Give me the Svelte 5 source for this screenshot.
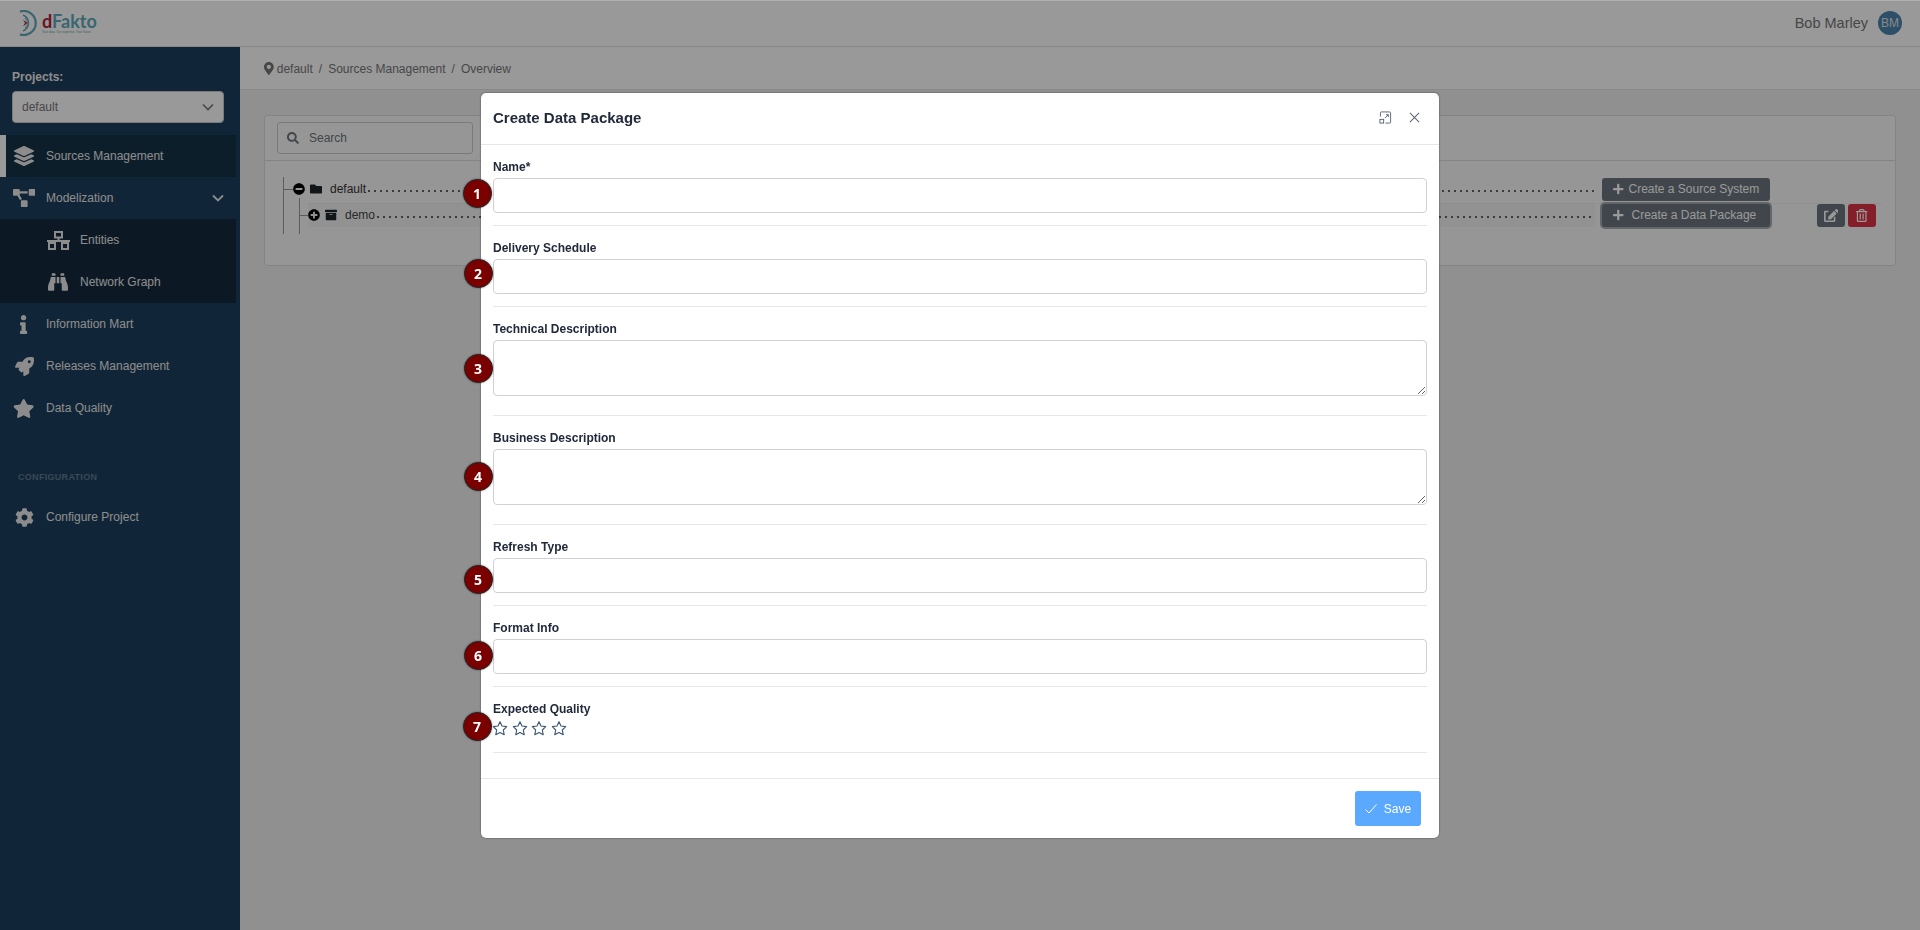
<script>
  const icons = {
    layers: [512, 512, 'M12.41 148.02l232.94 105.67c6.8 3.09 14.49 3.09 21.29 0l232.94-105.67c16.55-7.51 16.55-32.52 0-40.03L266.65 2.31a25.607 25.607 0 0 0-21.29 0L12.41 107.98c-16.55 7.51-16.55 32.53 0 40.04zm487.18 88.28l-58.09-26.33-161.64 73.27c-7.56 3.43-15.59 5.17-23.86 5.17s-16.29-1.74-23.86-5.17L70.51 209.97l-58.1 26.33c-16.55 7.5-16.55 32.5 0 40l232.94 105.59c6.8 3.08 14.49 3.08 21.29 0L499.59 276.3c16.55-7.5 16.55-32.5 0-40zm0 127.8l-57.87-26.23-161.86 73.37c-7.56 3.43-15.59 5.17-23.86 5.17s-16.29-1.74-23.86-5.17L70.29 337.87 12.41 364.1c-16.55 7.5-16.55 32.5 0 40l232.94 105.59c6.8 3.08 14.49 3.08 21.29 0L499.59 404.1c16.55-7.5 16.55-32.5 0-40z'],
    diagram: [640, 512, 'M384 320H256c-17.67 0-32 14.33-32 32v128c0 17.67 14.33 32 32 32h128c17.67 0 32-14.33 32-32V352c0-17.67-14.33-32-32-32zM192 32c0-17.67-14.33-32-32-32H32C14.33 0 0 14.33 0 32v128c0 17.67 14.33 32 32 32h95.72l73.16 128.04C211.98 300.98 232.4 288 256 288h.28L192 175.51V128h224V64H192V32zM608 0H480c-17.67 0-32 14.33-32 32v128c0 17.67 14.33 32 32 32h128c17.67 0 32-14.33 32-32V32c0-17.67-14.33-32-32-32z'],
    binoculars: [512, 512, 'M416 48c0-8.84-7.16-16-16-16h-64c-8.84 0-16 7.16-16 16v48h96V48zM63.91 159.99C61.4 253.84 3.46 274.22 0 404v44c0 17.67 14.33 32 32 32h96c17.67 0 32-14.33 32-32V288h32V128H95.84c-17.63 0-31.45 14.37-31.93 31.99zm384.18 0c-.48-17.62-14.3-31.99-31.93-31.99H320v160h32v160c0 17.67 14.33 32 32 32h96c17.67 0 32-14.33 32-32v-44c-3.46-129.78-61.4-150.16-63.91-244.01zM176 32h-64c-8.84 0-16 7.16-16 16v48h96V48c0-8.84-7.16-16-16-16zm48 256h64V128h-64v160z'],
    info: [192, 512, 'M20 424.229h20V279.771H20c-11.046 0-20-8.954-20-20V212c0-11.046 8.954-20 20-20h112c11.046 0 20 8.954 20 20v212.229h20c11.046 0 20 8.954 20 20V492c0 11.046-8.954 20-20 20H20c-11.046 0-20-8.954-20-20v-47.771c0-11.046 8.954-20 20-20zM96 0C56.235 0 24 32.235 24 72s32.235 72 72 72 72-32.235 72-72S135.764 0 96 0z'],
    rocket: [512, 512, 'M505.12019,19.09375c-1.18945-5.53125-6.65819-11-12.207-12.1875C460.716,0,435.507,0,410.40747,0,307.17523,0,245.26909,55.20312,199.05238,128H94.83772c-16.34763.01562-35.55658,11.875-42.88664,26.48438L2.51562,253.29688A28.4,28.4,0,0,0,0,264a24.00867,24.00867,0,0,0,24.00582,24H127.81618l-22.47457,22.46875c-11.36521,11.36133-12.99607,32.25781,0,45.25L156.24582,406.625c11.15623,11.1875,32.15619,13.15625,45.27726,0l22.47457-22.46875V488a24.00867,24.00867,0,0,0,24.00581,24,28.55934,28.55934,0,0,0,10.707-2.51562l98.72834-49.39063c14.62888-7.29687,26.50776-26.5,26.50776-42.85937V312.79688c72.59753-46.3125,128.03493-108.40626,128.03493-211.09376C512.07526,76.5,512.07526,51.29688,505.12019,19.09375ZM384.04033,168A40,40,0,1,1,424.05,128,40.02322,40.02322,0,0,1,384.04033,168Z'],
    star: [576, 512, 'M259.3 17.8L194 150.2 47.9 171.5c-26.2 3.8-36.7 36.1-17.7 54.6l105.7 103-25 145.5c-4.5 26.3 23.2 46 46.4 33.7L288 439.6l130.7 68.7c23.2 12.2 50.9-7.4 46.4-33.7l-25-145.5 105.7-103c19-18.5 8.5-50.8-17.7-54.6L382 150.2 316.7 17.8c-11.7-23.6-45.6-23.9-57.4 0z'],
    cog: [512, 512, 'M487.4 315.7l-42.6-24.6c4.3-23.2 4.3-47 0-70.2l42.6-24.6c4.9-2.8 7.1-8.6 5.5-14-11.1-35.6-30-67.8-54.7-94.6-3.8-4.1-10-5.1-14.8-2.3L380.8 110c-17.9-15.4-38.5-27.3-60.8-35.1V25.8c0-5.6-3.9-10.5-9.4-11.7-36.7-8.2-74.3-7.8-109.2 0-5.5 1.2-9.4 6.1-9.4 11.7V75c-22.2 7.9-42.8 19.8-60.8 35.1L88.7 85.5c-4.9-2.8-11-1.9-14.8 2.3-24.7 26.7-43.6 58.9-54.7 94.6-1.7 5.4.6 11.2 5.5 14L67.3 221c-4.3 23.2-4.3 47 0 70.2l-42.6 24.6c-4.9 2.8-7.1 8.6-5.5 14 11.1 35.6 30 67.8 54.7 94.6 3.8 4.1 10 5.1 14.8 2.3l42.6-24.6c17.9 15.4 38.5 27.3 60.8 35.1v49.2c0 5.6 3.9 10.5 9.4 11.7 36.7 8.2 74.3 7.8 109.2 0 5.5-1.2 9.4-6.1 9.4-11.7v-49.2c22.2-7.9 42.8-19.8 60.8-35.1l42.6 24.6c4.9 2.8 11 1.9 14.8-2.3 24.7-26.7 43.6-58.9 54.7-94.6 1.5-5.5-.7-11.3-5.6-14.1zM256 336c-44.1 0-80-35.9-80-80s35.9-80 80-80 80 35.9 80 80-35.9 80-80 80z'],
    marker: [384, 512, 'M172.268 501.67C26.97 291.031 0 268.413 0 192 0 85.961 85.961 0 192 0s192 85.961 192 192c0 76.413-26.97 99.031-172.268 309.67-9.535 13.774-29.93 13.773-39.464 0zM192 272c44.183 0 80-35.817 80-80s-35.817-80-80-80-80 35.817-80 80 35.817 80 80 80z'],
    search: [512, 512, 'M505 442.7L405.3 343c-4.5-4.5-10.6-7-17-7H372c27.6-35.3 44-79.7 44-128C416 93.1 322.9 0 208 0S0 93.1 0 208s93.1 208 208 208c48.3 0 92.7-16.4 128-44v16.3c0 6.4 2.5 12.5 7 17l99.7 99.7c9.4 9.4 24.6 9.4 33.9 0l28.3-28.3c9.4-9.4 9.4-24.6.1-34zM208 336c-70.7 0-128-57.2-128-128 0-70.7 57.2-128 128-128 70.7 0 128 57.2 128 128 0 70.7-57.2 128-128 128z'],
    folder: [512, 512, 'M464 128H272l-64-64H48C21.49 64 0 85.49 0 112v288c0 26.51 21.49 48 48 48h416c26.51 0 48-21.49 48-48V176c0-26.51-21.49-48-48-48z'],
    archive: [512, 512, 'M32 448c0 17.7 14.3 32 32 32h384c17.7 0 32-14.3 32-32V160H32v288zm160-212c0-6.6 5.4-12 12-12h104c6.6 0 12 5.4 12 12v8c0 6.6-5.4 12-12 12H204c-6.6 0-12-5.4-12-12v-8zM480 32H32C14.3 32 0 46.3 0 64v48c0 8.8 7.2 16 16 16h480c8.8 0 16-7.2 16-16V64c0-17.7-14.3-32-32-32z'],
    plusCircle: [512, 512, 'M256 8C119 8 8 119 8 256s111 248 248 248 248-111 248-248S393 8 256 8zm144 276c0 6.6-5.4 12-12 12h-92v92c0 6.6-5.4 12-12 12h-56c-6.6 0-12-5.4-12-12v-92h-92c-6.6 0-12-5.4-12-12v-56c0-6.6 5.4-12 12-12h92v-92c0-6.6 5.4-12 12-12h56c6.6 0 12 5.4 12 12v92h92c6.6 0 12 5.4 12 12v56z'],
    minusCircle: [512, 512, 'M256 8C119 8 8 119 8 256s111 248 248 248 248-111 248-248S393 8 256 8zM124 296c-6.6 0-12-5.4-12-12v-56c0-6.6 5.4-12 12-12h264c6.6 0 12 5.4 12 12v56c0 6.6-5.4 12-12 12H124z'],
    plus: [448, 512, 'M416 208H272V64c0-17.67-14.33-32-32-32h-32c-17.67 0-32 14.33-32 32v144H32c-17.67 0-32 14.33-32 32v32c0 17.67 14.33 32 32 32h144v144c0 17.67 14.33 32 32 32h32c17.67 0 32-14.33 32-32V304h144c17.67 0 32-14.33 32-32v-32c0-17.67-14.33-32-32-32z'],
    edit: [576, 512, 'M402.6 83.2l90.2 90.2c3.8 3.8 3.8 10 0 13.8L274.4 405.6l-92.8 10.3c-12.4 1.4-22.9-9.1-21.5-21.5l10.3-92.8L388.8 83.2c3.8-3.8 10-3.8 13.8 0zm162-22.9l-48.8-48.8c-15.2-15.2-39.9-15.2-55.2 0l-35.4 35.4c-3.8 3.8-3.8 10 0 13.8l90.2 90.2c3.8 3.8 10 3.8 13.8 0l35.4-35.4c15.2-15.3 15.2-40 0-55.2zM384 346.2V448H64V128h73.1c3.2 0 6.2-1.3 8.5-3.5l40-40c7.6-7.6 2.2-20.5-8.5-20.5H48C21.5 64 0 85.5 0 112v352c0 26.5 21.5 48 48 48h352c26.5 0 48-21.5 48-48V306.2c0-10.7-12.9-16-20.5-8.5l-40 40c-2.2 2.3-3.5 5.3-3.5 8.5z'],
    trash: [448, 512, 'M268 416h24a12 12 0 0 0 12-12V188a12 12 0 0 0-12-12h-24a12 12 0 0 0-12 12v216a12 12 0 0 0 12 12zM432 80h-82.41l-34-56.7A48 48 0 0 0 274.41 0H173.59a48 48 0 0 0-41.16 23.3L98.41 80H16A16 16 0 0 0 0 96v16a16 16 0 0 0 16 16h16v336a48 48 0 0 0 48 48h288a48 48 0 0 0 48-48V128h16a16 16 0 0 0 16-16V96a16 16 0 0 0-16-16zM171.84 50.91A6 6 0 0 1 177 48h94a6 6 0 0 1 5.15 2.91L293.61 80H154.39zM368 464H80V128h288zm-212-48h24a12 12 0 0 0 12-12V188a12 12 0 0 0-12-12h-24a12 12 0 0 0-12 12v216a12 12 0 0 0 12 12z']
  }

  const fields = [
    { label: 'Name*', kind: 'input' },
    { label: 'Delivery Schedule', kind: 'input' },
    { label: 'Technical Description', kind: 'area' },
    { label: 'Business Description', kind: 'area' },
    { label: 'Refresh Type', kind: 'input' },
    { label: 'Format Info', kind: 'input' }
  ]

  // numbered pins sit on the modal's left edge
  const pins = [
    { n: 1, x: 477, y: 192 },
    { n: 2, x: 478, y: 272 },
    { n: 3, x: 478, y: 367 },
    { n: 4, x: 478, y: 475 },
    { n: 5, x: 478, y: 578 },
    { n: 6, x: 478, y: 654 },
    { n: 7, x: 477, y: 725 }
  ]
</script>

{#snippet icon(name, size)}
  <svg class="ic" height={size} viewBox="0 0 {icons[name][0]} {icons[name][1]}" aria-hidden="true">
    <path fill="currentColor" d={icons[name][2]} />
  </svg>
{/snippet}

<div class="page">
  <header class="topbar">
    <div class="logo">
      <svg width="21" height="26" viewBox="0 0 21 26" aria-hidden="true" fill="none">
        <path d="M2 1.6 A12 12 0 1 1 2 24.4" stroke="#5fa9bd" stroke-width="2.2" />
        <path d="M5 5 A8.6 8.6 0 0 1 5 21" stroke="#5fa9bd" stroke-width="1.5" />
        <path d="M7 8 A6 6 0 0 1 7 18" stroke="#7fbccb" stroke-width="1.3" />
        <path d="M5 9.5 L9.5 13 L5 16.5 L7 13 Z" fill="#b0233a" />
      </svg>
      <div class="wordmark">
        <span class="brand"><b>d</b>Fakto</span>
        <span class="tagline">Your data. Our expertise. Your future.</span>
      </div>
    </div>
    <div class="user">
      <span>Bob Marley</span>
      <span class="avatar">BM</span>
    </div>
  </header>

  <div class="shell">
    <aside class="sidebar">
      <div class="projects">
        <div class="projects-label">Projects:</div>
        <div class="select">
          <span>default</span>
          <svg width="12" height="8" viewBox="0 0 12 8" aria-hidden="true"><path d="M1 1.5l5 5 5-5" fill="none" stroke="currentColor" stroke-width="1.6" /></svg>
        </div>
      </div>

      <nav>
        <a class="item active"><span class="nav-ic">{@render icon('layers', 20)}</span>Sources Management</a>
        <a class="item"><span class="nav-ic">{@render icon('diagram', 18)}</span>Modelization
          <svg class="chev" width="12" height="8" viewBox="0 0 12 8" aria-hidden="true"><path d="M1 1.5l5 5 5-5" fill="none" stroke="currentColor" stroke-width="1.8" /></svg>
        </a>
        <div class="sub">
          <a class="item">
            <span class="nav-ic">
              <svg width="23" height="19" viewBox="0 0 23 19" aria-hidden="true" fill="none" stroke="currentColor" stroke-width="2">
                <rect x="8" y="1" width="7" height="5.5" />
                <path d="M11.5 6.5V10M0 10h23M4 10v2M19 10v2" />
                <rect x="2" y="12" width="6" height="6" />
                <rect x="15" y="12" width="6" height="6" />
              </svg>
            </span>Entities
          </a>
          <a class="item"><span class="nav-ic">{@render icon('binoculars', 20)}</span>Network Graph</a>
        </div>
        <a class="item"><span class="nav-ic">{@render icon('info', 19)}</span>Information Mart</a>
        <a class="item"><span class="nav-ic">{@render icon('rocket', 19)}</span>Releases Management</a>
        <a class="item"><span class="nav-ic">{@render icon('star', 19)}</span>Data Quality</a>
      </nav>

      <div class="section">CONFIGURATION</div>
      <a class="item"><span class="nav-ic">{@render icon('cog', 19)}</span>Configure Project</a>
    </aside>

    <main class="main">
      <div class="crumbs">
        <span class="pin-ic">{@render icon('marker', 13)}</span>
        <span>default</span><i>/</i><span>Sources Management</span><i>/</i><span>Overview</span>
      </div>

      <section class="card">
        <div class="card-head">
          <div class="search">
            {@render icon('search', 12)}
            <span>Search</span>
          </div>
        </div>
        <div class="card-body">
          <div class="tree">
            <span class="guide g1"></span>
            <span class="guide g2"></span>
            <span class="guide g3"></span>
            <span class="guide g4"></span>
            <div class="row">
              <div class="row-main">
                <span class="toggle">{@render icon('minusCircle', 12)}</span>
                <span class="kind">{@render icon('folder', 12)}</span>
                <span class="node">default</span>
                <span class="dots"></span>
              </div>
              <button class="btn">{@render icon('plus', 12)}Create a Source System</button>
              <span class="actions"></span>
            </div>
            <div class="row child">
              <div class="row-main">
                <span class="toggle">{@render icon('plusCircle', 12)}</span>
                <span class="kind">{@render icon('archive', 12)}</span>
                <span class="node">demo</span>
                <span class="dots"></span>
              </div>
              <button class="btn focused">{@render icon('plus', 12)}<span class="pad">Create a Data Package</span></button>
              <span class="actions">
                <button class="mini">{@render icon('edit', 13)}</button>
                <button class="mini danger">{@render icon('trash', 13)}</button>
              </span>
            </div>
          </div>
        </div>
      </section>
    </main>
  </div>
</div>

<div class="overlay">
  <div class="modal">
    <div class="modal-head">
      <h2>Create Data Package</h2>
      <div class="modal-tools">
        <svg width="13" height="13" viewBox="0 0 14 14" aria-hidden="true" fill="none" stroke="#5b6472" stroke-width="1">
          <path d="M1.5 6V2a1 1 0 0 1 1-1h9a1 1 0 0 1 1 1v10a1 1 0 0 1-1 1H7" />
          <rect x="1" y="9" width="4" height="4" />
          <path d="M6.5 7.5L10 4M7.5 4H10v2.5" />
        </svg>
        <svg width="11" height="11" viewBox="0 0 12 12" aria-hidden="true" fill="none" stroke="#5b6472" stroke-width="1.1">
          <path d="M1 1l10 10M11 1L1 11" />
        </svg>
      </div>
    </div>

    <div class="modal-body">
      {#each fields as f}
        <div class="group" class:tall={f.kind === 'area'}>
          <label>
            <span class="lab">{f.label}</span>
            {#if f.kind === 'area'}
              <textarea></textarea>
            {:else}
              <input type="text" />
            {/if}
          </label>
        </div>
        <hr />
      {/each}
      <div class="group">
        <span class="lab">Expected Quality</span>
        <div class="stars">
          {#each [1, 2, 3, 4] as s}
            <svg width="16" height="16" viewBox="0 0 24 24" aria-label="{s} star">
              <polygon points="12 2.5 15 9 22 10 17 15 18.3 22 12 18.6 5.7 22 7 15 2 10 9 9" fill="none" stroke="#3f5873" stroke-width="1.7" stroke-linejoin="round" />
            </svg>
          {/each}
        </div>
      </div>
      <hr />
    </div>

    <div class="modal-foot">
      <button class="save">
        <svg width="12" height="10" viewBox="0 0 12 10" aria-hidden="true"><path d="M.5 5.5l3.5 3.5 7.5-8.5" fill="none" stroke="#fff" stroke-width="1" /></svg>
        Save
      </button>
    </div>
  </div>

  {#each pins as p}
    <span class="pin" style="left: {p.x - 14.5}px; top: {p.y - 14.5}px">{p.n}</span>
  {/each}
</div>

<style>
  :global(body) {
    margin: 0;
    font-family: 'Liberation Sans', Arial, sans-serif;
    font-size: 12px;
    background: #eef0ef;
    overflow: hidden;
  }

  .page {
    height: 930px;
    display: flex;
    flex-direction: column;
  }

  .ic {
    display: block;
  }

  .topbar {
    height: 46px;
    box-sizing: content-box;
    flex: none;
    display: flex;
    align-items: center;
    justify-content: space-between;
    background: #fff;
    border-bottom: 1px solid #dfdfdf;
    padding: 0 18px;
  }

  .logo {
    display: flex;
    align-items: center;
    gap: 3px;
  }

  .wordmark {
    display: flex;
    flex-direction: column;
    margin-top: 1px;
  }

  .brand {
    font-family: Lato, sans-serif;
    font-size: 18px;
    font-weight: 700;
    line-height: 17px;
    color: #5fa9bd;
  }

  .brand b {
    font-weight: 700;
    color: #b0233a;
  }

  .tagline {
    font-size: 3px;
    line-height: 5px;
    color: #6a9dad;
    white-space: nowrap;
  }

  .user {
    display: flex;
    align-items: center;
    gap: 10px;
    font-size: 14.5px;
    color: #757575;
  }

  .avatar {
    width: 24px;
    height: 24px;
    border-radius: 50%;
    background: #4b85ad;
    color: #e2e2e2;
    font-size: 12px;
    display: flex;
    align-items: center;
    justify-content: center;
  }

  .shell {
    flex: 1;
    display: flex;
    min-height: 0;
  }

  .sidebar {
    width: 240px;
    flex: none;
    background: #1c3e5c;
    color: #eaeaea;
  }

  .projects {
    padding: 22px 16px 12px 12px;
  }

  .projects-label {
    font-weight: 700;
    line-height: 16px;
    margin-bottom: 6px;
  }

  .select {
    height: 30px;
    padding: 0 9px;
    display: flex;
    align-items: center;
    justify-content: space-between;
    background: #fff;
    border: 1px solid #ccc;
    border-radius: 4px;
    color: #777;
  }

  nav {
    width: 236px;
  }

  .item {
    height: 42px;
    display: flex;
    align-items: center;
    position: relative;
    color: #eaeaea;
  }

  .nav-ic {
    width: 46px;
    flex: none;
    display: flex;
    justify-content: center;
    padding-left: 2px;
    box-sizing: border-box;
  }

  .active {
    background: #173349;
    box-shadow: inset 6px 0 0 #fff;
  }

  .chev {
    position: absolute;
    right: 12px;
  }

  .sub {
    background: #142b3f;
  }

  .sub .nav-ic {
    width: 80px;
    padding-left: 36px;
  }

  .section {
    margin: 42px 0 13px 18px;
    font-size: 9px;
    line-height: 12px;
    font-weight: 700;
    letter-spacing: 0.3px;
    color: #5f7a92;
  }

  .main {
    flex: 1;
    min-width: 0;
    display: flex;
    flex-direction: column;
    align-items: stretch;
  }

  .crumbs {
    height: 43px;
    flex: none;
    box-sizing: border-box;
    display: flex;
    align-items: center;
    gap: 6px;
    padding: 1px 0 0 24px;
    background: #fff;
    border-bottom: 1px solid #e5e5e5;
    color: #777;
  }

  .pin-ic {
    margin-right: -3px;
  }

  .crumbs i {
    font-style: normal;
  }

  .card {
    margin: 25px 24px 0;
    background: #fafafa;
    border: 1px solid #ddd;
    border-radius: 3px;
  }

  .card-head {
    padding: 6px 12px;
    border-bottom: 1px solid #ddd;
  }

  .search {
    width: 196px;
    height: 32px;
    box-sizing: border-box;
    display: flex;
    align-items: center;
    gap: 10px;
    padding-left: 9px;
    border: 1px solid #ccc;
    border-radius: 3px;
    color: #6c757d;
  }

  .card-body {
    padding: 15px 12px 36px;
  }

  .tree {
    position: relative;
    padding-left: 16px;
  }

  .guide {
    position: absolute;
    background: #999;
  }

  .g1 { left: 6px; top: 0; width: 1px; height: 57px; }
  .g2 { left: 6px; top: 12px; width: 10px; height: 1px; }
  .g3 { left: 22px; top: 21px; width: 1px; height: 36px; }
  .g4 { left: 22px; top: 38px; width: 9px; height: 1px; }

  .row {
    height: 24px;
    margin-top: 1px;
    margin-bottom: 2px;
    display: flex;
    align-items: center;
    color: #333;
  }

  .row-main {
    flex: 1;
    min-width: 0;
    height: 100%;
    display: flex;
    align-items: center;
  }

  .row.child {
    margin-left: 15px;
    box-shadow: inset 0 1px 0 rgba(0, 0, 0, 0.03);
    color: #444;
  }

  .child .row-main {
    background: rgba(0, 0, 0, 0.025);
    margin-right: 7px;
  }

  .toggle {
    color: #000;
    width: 17px;
    flex: none;
  }

  .kind {
    color: #1e252b;
    width: 20px;
    flex: none;
  }

  .node {
    margin-top: -1px;
  }

  .dots {
    flex: 1;
    height: 2px;
    margin: 3px 8px 0 2px;
    background: radial-gradient(circle at 1px 1px, #666 1px, transparent 1.2px) 0 0 / 6px 2px repeat-x;
  }

  .child .dots {
    margin-right: 1px;
  }

  .btn {
    width: 168px;
    height: 23px;
    flex: none;
    display: flex;
    align-items: center;
    gap: 5px;
    padding: 0 0 0 11px;
    border: 0;
    border-radius: 3px;
    background: #6c757d;
    color: #fff;
    font: 12px 'Liberation Sans', Arial, sans-serif;
  }

  .btn .pad {
    margin-left: 3px;
  }

  .focused {
    box-shadow: 0 0 0 2px rgba(130, 138, 145, 0.7);
  }

  .actions {
    width: 113px;
    flex: none;
    display: flex;
    justify-content: flex-end;
    gap: 3px;
    padding-right: 7px;
    box-sizing: border-box;
  }

  .mini {
    width: 28px;
    height: 23px;
    padding: 0;
    display: flex;
    align-items: center;
    justify-content: center;
    border: 0;
    border-radius: 3px;
    background: #6c757d;
    color: #fff;
  }

  .danger {
    background: #dc3545;
  }

  .overlay {
    position: fixed;
    inset: 0;
    background: rgba(0, 0, 0, 0.4);
    border-top: 1px solid rgba(255, 255, 255, 0.22);
    display: flex;
    justify-content: center;
    align-items: flex-start;
    padding-top: 92px;
  }

  .modal {
    width: 958px;
    background: #fff;
    border-radius: 5px;
    box-shadow: 0 0 2px rgba(0, 0, 0, 0.6);
    color: #212a3b;
  }

  .modal-head {
    height: 52px;
    box-sizing: border-box;
    display: flex;
    align-items: center;
    justify-content: space-between;
    padding: 0 19px 2px 12px;
    border-bottom: 1px solid #e5e7eb;
  }

  h2 {
    margin: 0;
    font-size: 15px;
    font-weight: 700;
  }

  .modal-tools {
    display: flex;
    align-items: center;
    gap: 17px;
  }

  .modal-body {
    padding: 12px 12px 13px;
  }

  .group {
    margin-bottom: 12px;
  }

  .group.tall {
    margin-bottom: 19px;
  }

  .lab {
    display: block;
    font-size: 12px;
    font-weight: 700;
    line-height: 17px;
    padding-top: 2px;
    margin-bottom: 2px;
  }

  input,
  textarea {
    display: block;
    width: 100%;
    box-sizing: border-box;
    height: 35px;
    border: 1px solid #cfd1d8;
    border-radius: 4px;
    background: #fff;
    padding: 0 8px;
    margin: 0;
    outline: none;
  }

  textarea {
    height: 56px;
  }

  hr {
    margin: 0 0 12px;
    border: 0;
    border-top: 1px solid #e6e6e6;
  }

  .stars {
    display: flex;
    gap: 3.6px;
    height: 20px;
    margin-left: -1px;
  }

  .modal-foot {
    display: flex;
    justify-content: flex-end;
    padding: 12px 18px 12px 12px;
    border-top: 1px solid #e8e8e8;
  }

  .save {
    width: 66px;
    height: 35px;
    display: flex;
    align-items: center;
    justify-content: center;
    gap: 7px;
    padding: 0;
    border: 0;
    border-radius: 3px;
    background: #5aa9ff;
    color: #fff;
    font: 12px 'Liberation Sans', Arial, sans-serif;
  }

  .pin {
    position: absolute;
    width: 29px;
    height: 29px;
    box-sizing: border-box;
    border-radius: 50%;
    background: #7a0000;
    border: 1px solid #222;
    box-shadow: 0 0 2px rgba(0, 0, 0, 0.5);
    color: #fff;
    font: 700 14px 'Open Sans', sans-serif;
    display: flex;
    align-items: center;
    justify-content: center;
  }
</style>
